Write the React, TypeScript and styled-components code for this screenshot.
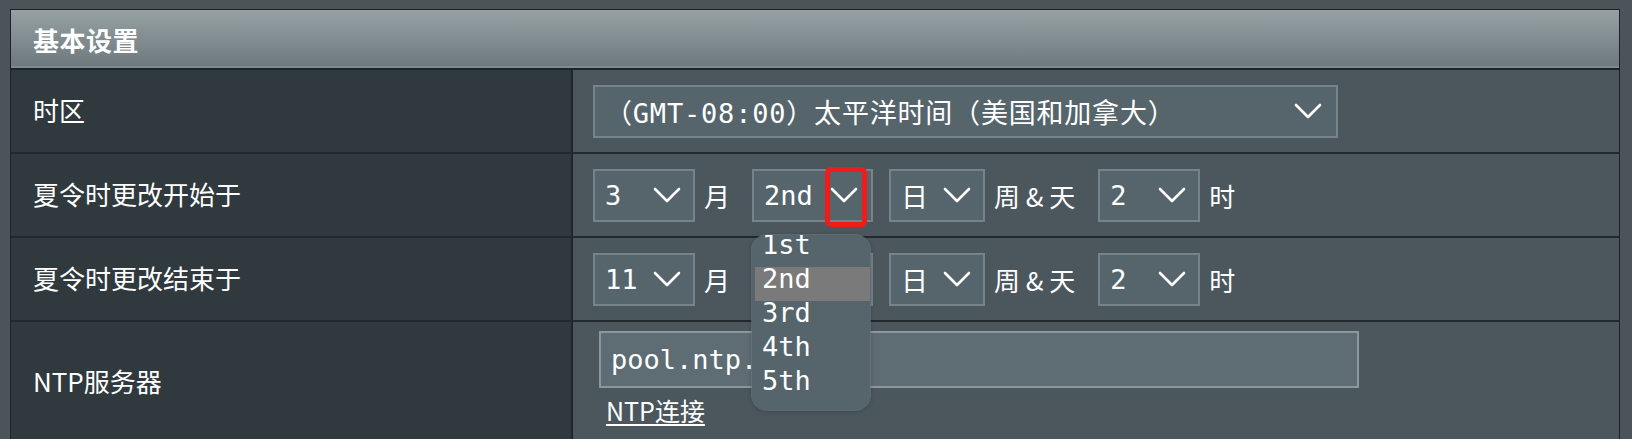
import React from 'react'
import styled, { createGlobalStyle } from 'styled-components'

const GlobalStyle = createGlobalStyle`
  html, body {
    margin: 0;
    background: #4b5559;
  }
  body {
    font-family: "Noto Sans CJK SC", "Liberation Sans", sans-serif;
    color: #ffffff;
    overflow: hidden;
  }
`

const Frame = styled.div`
  height: 439px;
  box-sizing: border-box;
  padding: 9px 12px 0 10px;
`

const Panel = styled.section`
  height: 100%;
  box-sizing: border-box;
  border: 1px solid #1c2225;
  border-bottom: none;
  background: #4b575d;
  display: flex;
  flex-direction: column;
`

const Header = styled.header`
  height: 58px;
  flex-shrink: 0;
  display: flex;
  align-items: center;
  padding-left: 22px;
  background: linear-gradient(#96a1a4, #6c787c);
  box-shadow: inset 0 -2px 0 #7f8a8e;
  border-bottom: 2px solid #1d2326;
  font-size: 26px;
  font-weight: bold;
  letter-spacing: 0.5px;
`

const Row = styled.div<{ $height: number }>`
  display: grid;
  grid-template-columns: 562px 1fr;
  height: ${(p) => p.$height}px;
  flex-shrink: 0;
  border-bottom: 2px solid #22292c;
`

const Label = styled.div`
  display: flex;
  align-items: center;
  padding: 0 0 4px 22px;
  background: #30393d;
  border-right: 2px solid #1f2629;
  font-size: 26px;
`

const Value = styled.div<{ $column?: boolean }>`
  display: flex;
  flex-direction: ${(p) => (p.$column ? 'column' : 'row')};
  align-items: ${(p) => (p.$column ? 'flex-start' : 'center')};
  padding: ${(p) => (p.$column ? '9px 0 0 26px' : '0 0 0 20px')};
  gap: 9px;
`

const SelectBox = styled.div<{ $after?: number }>`
  position: relative;
  margin-right: ${(p) => p.$after ?? 0}px;
`

const Select = styled.div<{ $width: number; $height?: number; $chevronPad?: number }>`
  width: ${(p) => p.$width}px;
  height: ${(p) => p.$height ?? 53}px;
  box-sizing: border-box;
  display: flex;
  align-items: center;
  justify-content: space-between;
  padding: 0 ${(p) => p.$chevronPad ?? 12}px 0 10px;
  background: #56656b;
  border: 2px solid #75838a;
  font-family: "DejaVu Sans Mono", "Noto Sans CJK SC", monospace;
  font-size: 27px;
  white-space: nowrap;
`

const ZoneText = styled.span`
  letter-spacing: 0.8px;
`

const Unit = styled.span<{ $after?: number }>`
  font-size: 26px;
  margin-right: ${(p) => p.$after ?? 0}px;
  white-space: pre;
`

const Marker = styled.div`
  position: absolute;
  left: 73px;
  top: -2px;
  width: 42px;
  height: 60px;
  box-sizing: border-box;
  border: 5px solid #f01b1b;
  border-radius: 6px;
`

const Popup = styled.div`
  position: absolute;
  left: 0;
  top: calc(100% + 13px);
  width: 118px;
  height: 175px;
  box-sizing: border-box;
  overflow: hidden;
  padding-left: 3px;
  border-radius: 15px;
  background: #55656b;
  box-shadow: 0 0 0 1px rgba(110, 124, 130, 0.6), 0 1px 5px rgba(0, 0, 0, 0.25);
  z-index: 2;
`

const Option = styled.div<{ $active?: boolean }>`
  height: 34px;
  box-sizing: border-box;
  padding-left: 7px;
  line-height: 24px;
  font-family: "DejaVu Sans Mono", monospace;
  font-size: 27px;
  background: ${(p) => (p.$active ? '#7a7a7a' : 'transparent')};
  &:first-child {
    margin-top: -2px;
  }
`

const Input = styled.div`
  width: 760px;
  height: 57px;
  box-sizing: border-box;
  display: flex;
  align-items: center;
  padding-left: 10px;
  background: #5e6c73;
  border: 2px solid #8a979c;
  font-family: "DejaVu Sans Mono", monospace;
  font-size: 27px;
`

const Link = styled.a`
  margin: -3px 0 0 7px;
  font-size: 25px;
  line-height: 32px;
  color: #ffffff;
  text-decoration: underline;
  text-underline-offset: 3px;
`

const Chevron: React.FC = () => (
  <svg width="28" height="16" viewBox="0 0 28 16" fill="none">
    <path d="M2 2 L14 14 L26 2" stroke="#ffffff" strokeWidth="2.6" strokeLinecap="round" strokeLinejoin="round" />
  </svg>
)

const weeks = ['1st', '2nd', '3rd', '4th', '5th']

type DstProps = {
  label: string
  month: string
  week: string
  open?: boolean
}

const DstRow: React.FC<DstProps> = ({ label, month, week, open }) => (
  <Row $height={82}>
    <Label>{label}</Label>
    <Value>
      <Select $width={102}>
        {month}
        <Chevron />
      </Select>
      <Unit $after={13}>月</Unit>
      <SelectBox $after={7}>
        <Select $width={121} $chevronPad={13}>
          {week}
          <Chevron />
        </Select>
        {open && (
          <>
            <Marker />
            <Popup>
              {weeks.map((w) => (
                <Option key={w} $active={w === week}>
                  {w}
                </Option>
              ))}
            </Popup>
          </>
        )}
      </SelectBox>
      <Select $width={96}>
        日
        <Chevron />
      </Select>
      <Unit $after={14}>周 &amp; 天</Unit>
      <Select $width={102}>
        2
        <Chevron />
      </Select>
      <Unit>时</Unit>
    </Value>
  </Row>
)

export default function App() {
  return (
    <>
      <GlobalStyle />
      <Frame>
        <Panel>
          <Header>基本设置</Header>
          <Row $height={82}>
            <Label>时区</Label>
            <Value>
              <Select $width={745} $chevronPad={14}>
                <ZoneText>（GMT-08:00）太平洋时间（美国和加拿大）</ZoneText>
                <Chevron />
              </Select>
            </Value>
          </Row>
          <DstRow label="夏令时更改开始于" month="3" week="2nd" open />
          <DstRow label="夏令时更改结束于" month="11" week="1st" />
          <Row $height={120}>
            <Label>NTP服务器</Label>
            <Value $column>
              <Input>pool.ntp.org</Input>
              <Link href="#">NTP连接</Link>
            </Value>
          </Row>
        </Panel>
      </Frame>
    </>
  )
}
